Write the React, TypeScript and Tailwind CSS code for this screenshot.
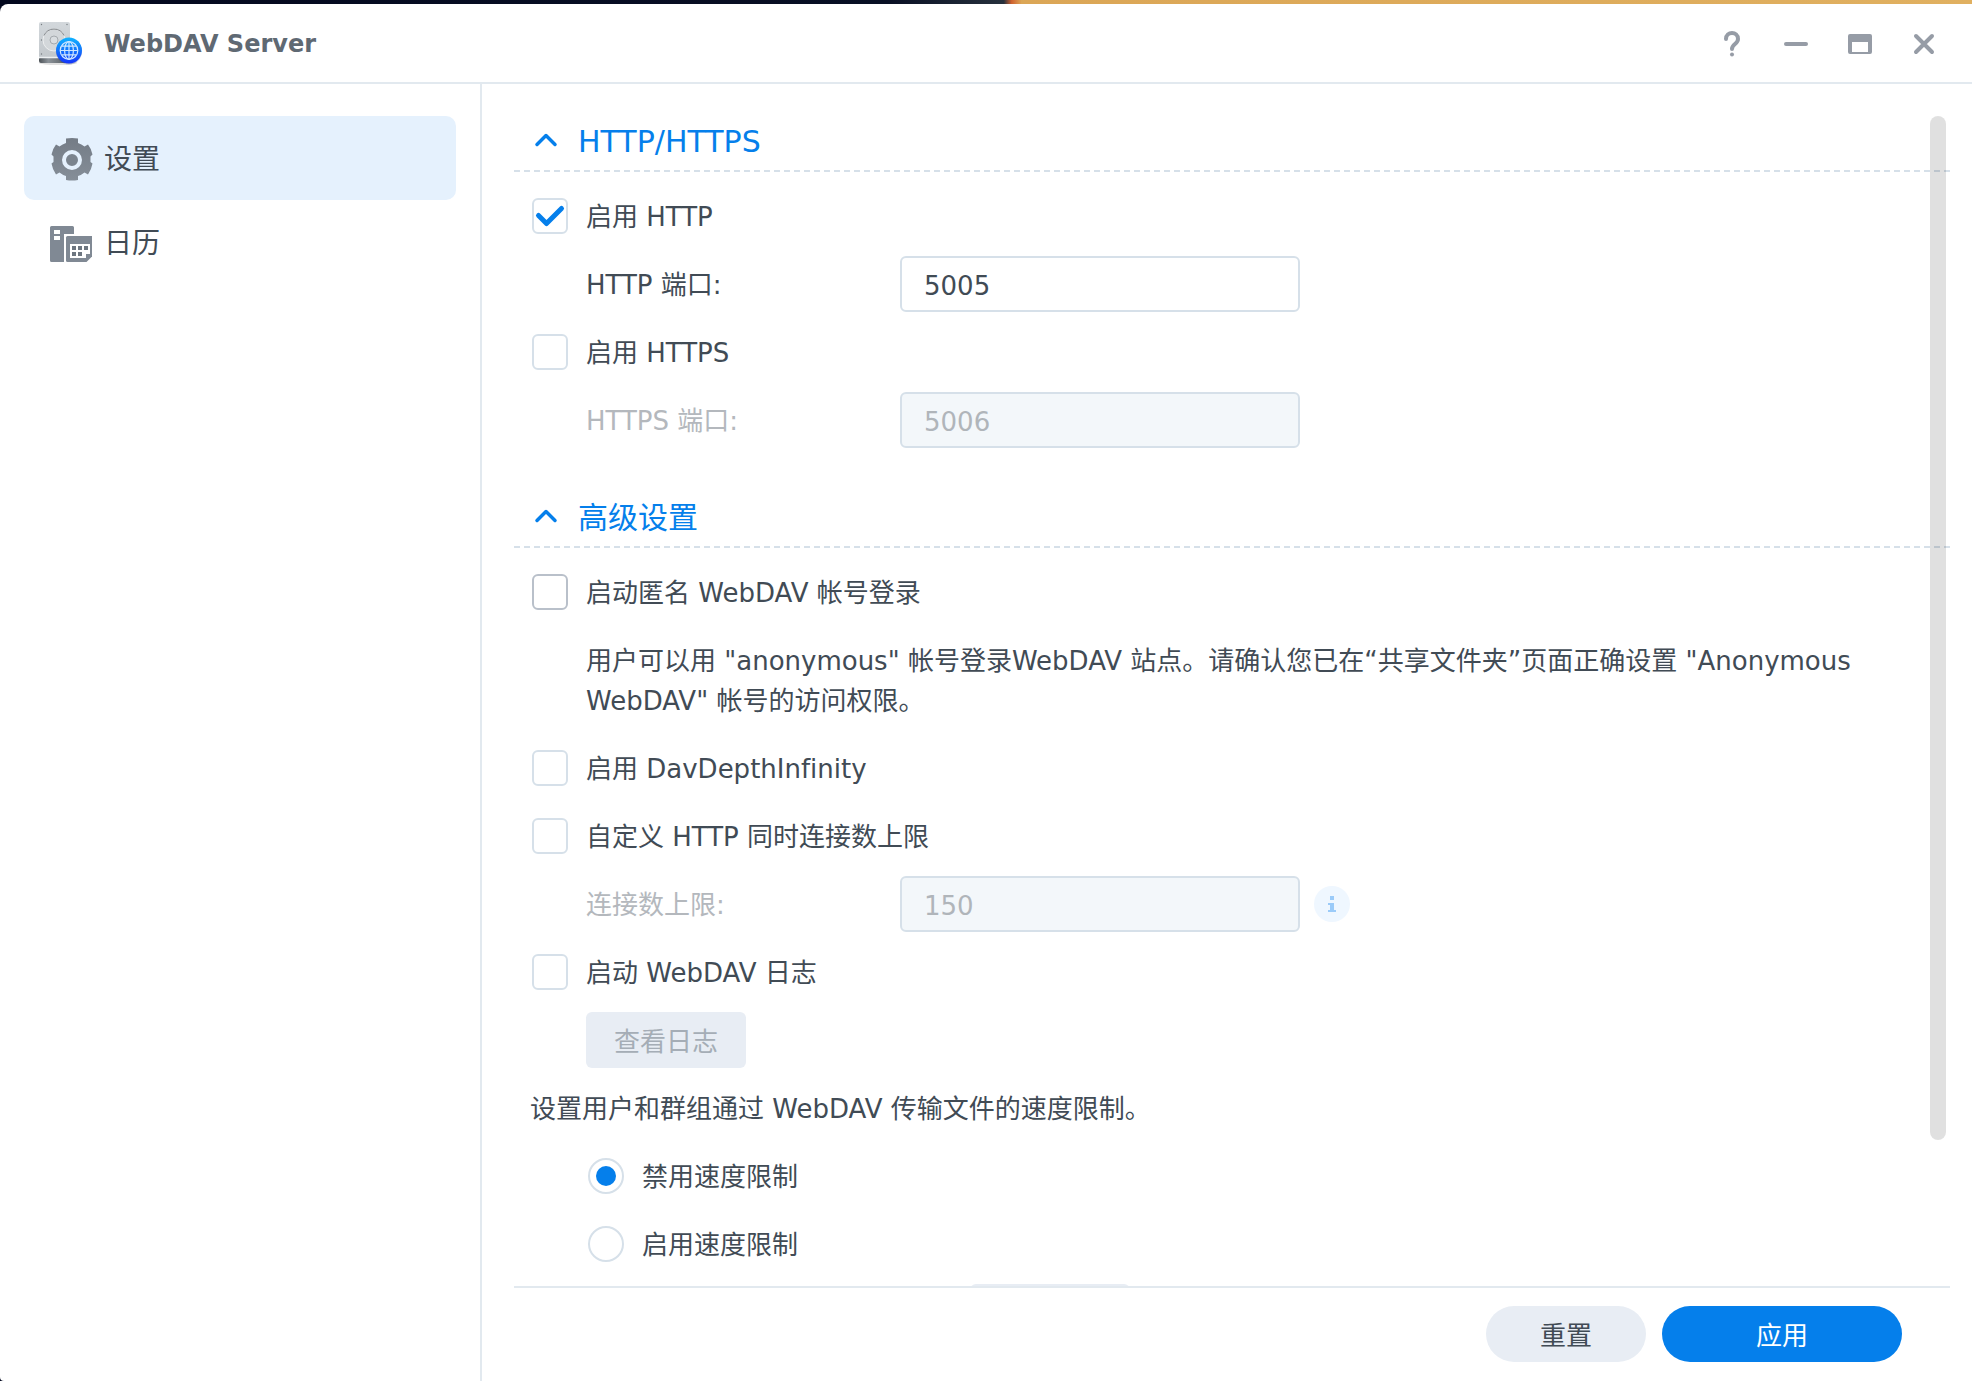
import { useState } from "react";
import type { ReactNode } from "react";

function AppLogo() {
  return (
    <svg className="size-12 shrink-0" viewBox="0 0 48 48" aria-hidden="true">
      <defs>
        <linearGradient id="disk" x1="0" y1="0" x2="0" y2="1">
          <stop offset="0" stopColor="#d3d8dc" />
          <stop offset="1" stopColor="#c2c7cb" />
        </linearGradient>
        <linearGradient id="base" x1="0" y1="0" x2="1" y2="0">
          <stop offset="0" stopColor="#4d5358" />
          <stop offset="0.3" stopColor="#8b9298" />
          <stop offset="1" stopColor="#4d5358" />
        </linearGradient>
        <linearGradient id="globe" x1="0" y1="0" x2="0" y2="1">
          <stop offset="0" stopColor="#10b4ff" />
          <stop offset="1" stopColor="#1433fa" />
        </linearGradient>
      </defs>
      <ellipse cx="22" cy="43" rx="19" ry="2" fill="#000" opacity="0.12" />
      <rect x="3" y="37" width="31" height="6" rx="2" fill="url(#base)" />
      <path d="M5 2h27a2 2 0 0 1 2 2v34H3V4a2 2 0 0 1 2-2z" fill="url(#disk)" />
      <path d="M3 37.500h31" stroke="#eceff1" strokeWidth="1.500" />
      <circle cx="18" cy="20" r="11" fill="#d3d7da" stroke="#eceeef" strokeWidth="1" />
      <path d="M8 15.500a11 11 0 0 1 20 0" fill="none" stroke="#85898d" strokeWidth="1" />
      <circle cx="18" cy="20" r="4" fill="#d9dde0" stroke="#a5aaae" strokeWidth="1" />
      <g fill="#767c81">
        <circle cx="5.500" cy="4.500" r="0.700" />
        <circle cx="31" cy="4.500" r="0.700" />
        <circle cx="5.500" cy="20" r="0.700" />
        <circle cx="5.500" cy="34" r="0.700" />
      </g>
      <circle cx="33" cy="31.500" r="13" fill="#0a2a80" opacity="0.25" />
      <circle cx="33" cy="30.500" r="13" fill="url(#globe)" />
      <g fill="none" stroke="#cfe6ff" strokeWidth="1.200">
        <circle cx="33" cy="30.500" r="8.800" />
        <ellipse cx="33" cy="30.500" rx="4.400" ry="8.800" />
        <path d="M33 21.700v17.600M24.200 30.500h17.600M26 26.200h14M26 34.800h14" />
      </g>
    </svg>
  );
}

function GearIcon() {
  return (
    <svg className="size-11 shrink-0" viewBox="0 0 44 44" aria-hidden="true">
      <defs>
        <linearGradient id="gear" x1="0" y1="0" x2="0" y2="1">
          <stop offset="0" stopColor="#747c86" />
          <stop offset="1" stopColor="#858e98" />
        </linearGradient>
      </defs>
      <path
        d="M16 1.500Q22 0.500 28 1.500V6Q31.500 7 34.500 9.500L38 7.500Q41.500 12 42.500 17.500L40.500 19.500V25L42.500 26.500Q41.500 32.500 38 37.500L34.500 35.500Q31.500 38 28 39V43Q22 44 16 43V39Q12.500 38 9.500 35.500L6 37.500Q2.500 32.500 1.500 26.500L3.500 25V19.500L1.500 17.500Q2.500 12 6 7.500L9.500 9.500Q12.500 7 16 6Z"
        fill="url(#gear)"
      />
      <circle cx="22" cy="23" r="8" fill="#7b848e" stroke="#e5f1fd" strokeWidth="4" />
    </svg>
  );
}

function CalendarIcon() {
  return (
    <svg className="size-11 shrink-0" viewBox="0 0 44 44" aria-hidden="true">
      <path d="M1.500 5h21a1.500 1.500 0 0 1 1.500 1.500V13H14v28H1.500a1.500 1.500 0 0 1-1.500-1.500v-33A1.500 1.500 0 0 1 1.500 5z" fill="#808994" />
      <path d="M4 9h6v4H4zM4 15h6v4H4z" fill="#fff" />
      <path d="M17.500 15H42v20.500L36.500 41h-19a1.500 1.500 0 0 1-1.500-1.500v-23a1.500 1.500 0 0 1 1.500-1.500z" fill="#808994" />
      <path d="M20 23h20v10h-4v4H20z" fill="#fff" />
      <path d="M22 25h4v4h-4zM28 25h4v4h-4zM34 25h4v4h-4zM22 31h4v4h-4zM28 31h4v4h-4z" fill="#6d7680" />
    </svg>
  );
}

function WindowButton({ label, children }: { label: string; children: ReactNode }) {
  return (
    <button type="button" aria-label={label} className="flex size-10 items-center justify-center text-[#969ca6]">
      <svg className="size-8" viewBox="0 0 32 32" fill="none" stroke="currentColor" strokeWidth="4" strokeLinecap="round" aria-hidden="true">
        {children}
      </svg>
    </button>
  );
}

function Section({ title, children }: { title: string; children: ReactNode }) {
  const [open, setOpen] = useState(true);
  return (
    <section className="flex flex-col gap-4">
      <h2 className="border-b-2 border-dashed border-[#d6e0e9]">
        <button
          type="button"
          aria-expanded={open}
          onClick={() => setOpen(!open)}
          className="flex h-[54px] w-full items-center gap-5 pb-0.5 pl-5 text-[30px] leading-10 text-[#057feb]"
        >
          <svg className="size-6" viewBox="0 0 24 24" fill="none" stroke="currentColor" strokeWidth="3.500" strokeLinecap="round" strokeLinejoin="round" aria-hidden="true">
            <path d="M3 14.500l9-9 9 9" />
          </svg>
          {title}
        </button>
      </h2>
      {open && <div className="flex flex-col gap-3 pl-[18px]">{children}</div>}
    </section>
  );
}

function Check({ label, defaultChecked, strong }: { label: string; defaultChecked?: boolean; strong?: boolean }) {
  return (
    <label className="flex h-14 items-center gap-[18px]">
      <span className="relative flex size-9">
        <input
          type="checkbox"
          defaultChecked={defaultChecked}
          className={`peer size-9 appearance-none rounded-md border-2 bg-white ${strong ? "border-[#b9c0ca]" : "border-[#d6e0e9]"}`}
        />
        <svg className="pointer-events-none absolute inset-0 hidden size-9 text-[#057feb] peer-checked:block" viewBox="0 0 36 36" fill="none" stroke="currentColor" strokeWidth="5" strokeLinecap="round" strokeLinejoin="round" aria-hidden="true">
          <path d="M6.500 17.500l8 8L29.500 10.500" />
        </svg>
      </span>
      <span className="pt-0.5">{label}</span>
    </label>
  );
}

function Field({ id, label, value, disabled, children }: { id: string; label: string; value: string; disabled?: boolean; children?: ReactNode }) {
  return (
    <div className="flex h-14 items-center pl-[54px]">
      <label htmlFor={id} className={`w-[314px] shrink-0 pt-0.5 ${disabled ? "text-[#b4b8bd]" : ""}`}>
        {label}
      </label>
      <input
        id={id}
        type="text"
        defaultValue={value}
        disabled={disabled}
        className="h-14 w-[400px] rounded-md border-2 border-[#d6e0e9] bg-white px-[22px] pt-1 disabled:bg-[#f3f7fa] disabled:text-[#b0b5ba]"
      />
      {children}
    </div>
  );
}

function Radio({ label, defaultChecked }: { label: string; defaultChecked?: boolean }) {
  return (
    <label className="flex h-14 items-center gap-[18px] pl-14">
      <span className="relative flex size-9 items-center justify-center">
        <input type="radio" name="speed-limit" defaultChecked={defaultChecked} className="peer size-9 appearance-none rounded-full border-2 border-[#d6e0e9] bg-white" />
        <span className="pointer-events-none absolute hidden size-5 rounded-full bg-[#057feb] peer-checked:block" />
      </span>
      <span className="pt-0.5">{label}</span>
    </label>
  );
}

export default function App() {
  return (
    <div className="flex h-screen flex-col bg-[linear-gradient(90deg,#03081e_0%,#080f24_45%,#26303c_50.9%,#d0622f_51.3%,#dba656_51.8%,#e0b060_100%)] pt-1 font-['DejaVu_Sans','Noto_Sans_CJK_SC',sans-serif] text-[26px] leading-10 text-[#414b55] [font-variant-ligatures:none]">
      <div className="flex min-h-0 flex-1 flex-col overflow-hidden rounded-tl-lg rounded-bl-sm bg-white">
        <header className="flex h-20 shrink-0 items-center border-b-2 border-[#e2e9ef] pt-0.5 pr-7 pl-9">
          <AppLogo />
          <h1 className="ml-5 flex-1 text-2xl leading-10 font-bold text-[#5f6973]">WebDAV Server</h1>
          <div className="flex gap-6">
            <WindowButton label="帮助">
              <path d="M10 11c0-4 3-6 6-6s6 2 6 6c0 5-6 5-6 10" />
              <path d="M16 26.500v.1" />
            </WindowButton>
            <WindowButton label="最小化">
              <path d="M6 16h20" />
            </WindowButton>
            <WindowButton label="最大化">
              <path d="M6 6h20a2 2 0 0 1 2 2v16a2 2 0 0 1-2 2H6a2 2 0 0 1-2-2V8a2 2 0 0 1 2-2zM8 14v10h16V14z" fill="currentColor" fillRule="evenodd" stroke="none" />
            </WindowButton>
            <WindowButton label="关闭">
              <path d="M8 8l16 16M24 8L8 24" />
            </WindowButton>
          </div>
        </header>

        <div className="flex min-h-0 flex-1">
          <nav className="w-[482px] shrink-0 border-r-2 border-[#e2e9ef] px-6 pt-8 text-[28px]">
            <a href="#settings" aria-current="page" className="flex h-[84px] items-center gap-2.5 rounded-[10px] bg-[#e5f1fd] pt-0.5 pl-[26px]">
              <GearIcon />
              <span className="pt-0.5">设置</span>
            </a>
            <a href="#calendar" className="flex h-[84px] items-center gap-2.5 rounded-[10px] pt-0.5 pl-[26px]">
              <CalendarIcon />
              <span className="pt-0.5">日历</span>
            </a>
          </nav>

          <main className="flex min-w-0 flex-1 flex-col pt-8 pr-[22px] pl-8">
            <div className="relative min-h-0 flex-1">
              <div className="flex h-full flex-col gap-11 overflow-hidden">
                <Section title="HTTP/HTTPS">
                  <Check label="启用 HTTP" defaultChecked />
                  <Field id="http-port" label="HTTP 端口:" value="5005" />
                  <Check label="启用 HTTPS" />
                  <Field id="https-port" label="HTTPS 端口:" value="5006" disabled />
                </Section>

                <Section title="高级设置">
                  <Check label="启动匿名 WebDAV 帐号登录" strong />
                  <p className="pt-[9px] pr-20 pb-[7px] pl-[54px]">
                    用户可以用 "anonymous" 帐号登录WebDAV 站点。请确认您已在“共享文件夹”页面正确设置 "Anonymous WebDAV" 帐号的访问权限。
                  </p>
                  <Check label="启用 DavDepthInfinity" />
                  <Check label="自定义 HTTP 同时连接数上限" />
                  <Field id="connection-limit" label="连接数上限:" value="150" disabled>
                    <button type="button" aria-label="说明" className="ml-[14px] flex size-9 items-center justify-center rounded-full bg-[#eff7ff] text-[#9bcbf9]">
                      <svg className="size-9" viewBox="0 0 36 36" fill="currentColor" aria-hidden="true">
                        <path d="M16 10h4v4h-4zM14 17h6v7h2v2h-8v-2h2v-5h-2z" />
                      </svg>
                    </button>
                  </Field>
                  <Check label="启动 WebDAV 日志" />
                  <div className="pl-[54px]">
                    <button type="button" disabled className="block h-14 w-40 rounded-md bg-[#e8edf4] pt-1 text-[#a5adb6]">
                      查看日志
                    </button>
                  </div>
                  <p className="-ml-0.5 flex h-14 items-center pt-0.5">设置用户和群组通过 WebDAV 传输文件的速度限制。</p>
                  <Radio label="禁用速度限制" defaultChecked />
                  <Radio label="启用速度限制" />
                  <div className="pl-[438px]">
                    <button type="button" aria-label="速度限制设置" disabled className="block h-14 w-40 rounded-md bg-[#e8edf4]" />
                  </div>
                </Section>
              </div>
              <div className="absolute top-0 right-1 h-[1024px] w-4 rounded-full bg-black/12" />
            </div>
            <footer className="flex shrink-0 justify-end gap-4 border-t-2 border-[#e2e9ef] pt-[18px] pr-12 pb-[19px]">
              <button type="button" className="h-14 w-40 rounded-full bg-[#e8edf4] pt-1">
                重置
              </button>
              <button type="button" className="h-14 w-60 rounded-full bg-[#057feb] pt-1 text-white">
                应用
              </button>
            </footer>
          </main>
        </div>
      </div>
    </div>
  );
}
